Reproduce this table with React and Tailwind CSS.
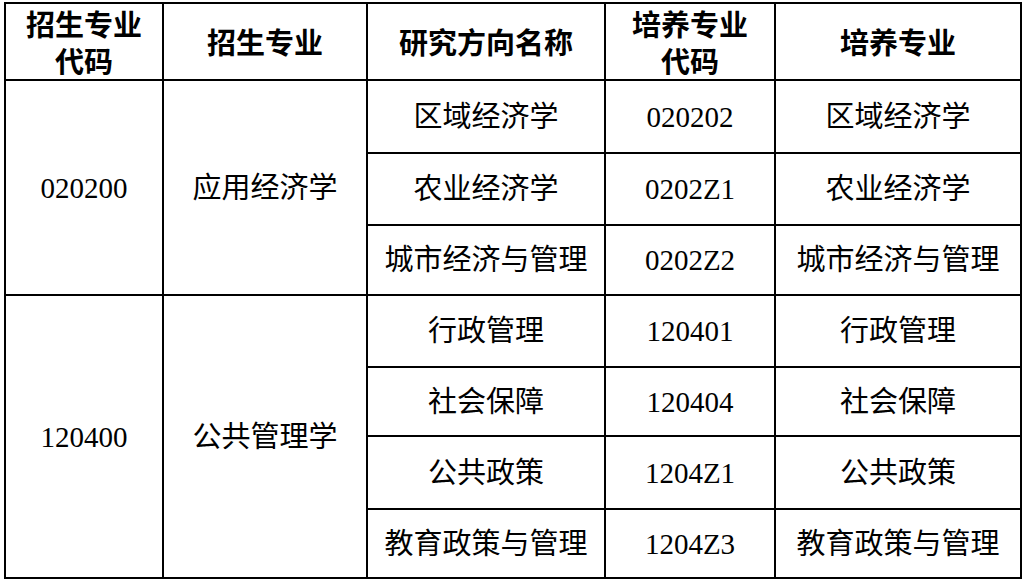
const serif = "font-['Liberation_Serif','Noto_Sans_CJK_SC',serif]";

const groups = [
  {
    code: "020200",
    name: "应用经济学",
    rows: [
      { dir: "区域经济学", pcode: "020202", pname: "区域经济学", h: "h-[73px]" },
      { dir: "农业经济学", pcode: "0202Z1", pname: "农业经济学", h: "h-[72px]" },
      { dir: "城市经济与管理", pcode: "0202Z2", pname: "城市经济与管理", h: "h-[70px]" },
    ],
  },
  {
    code: "120400",
    name: "公共管理学",
    rows: [
      { dir: "行政管理", pcode: "120401", pname: "行政管理", h: "h-[72px]" },
      { dir: "社会保障", pcode: "120404", pname: "社会保障", h: "h-[69px]" },
      { dir: "公共政策", pcode: "1204Z1", pname: "公共政策", h: "h-[73px]" },
      { dir: "教育政策与管理", pcode: "1204Z3", pname: "教育政策与管理", h: "h-[69px]" },
    ],
  },
];

const cell = "border-2 border-black text-center align-middle p-0 whitespace-nowrap";

export default function App() {
  return (
    <div className={`w-[1024px] h-[582px] bg-white overflow-hidden pt-[2px] pl-[4px] text-black ${serif}`}>
      <table className="table-fixed border-collapse w-[1016px]">
        <colgroup>
          <col className="w-[158px]" />
          <col className="w-[204px]" />
          <col className="w-[238px]" />
          <col className="w-[170px]" />
          <col className="w-[246px]" />
        </colgroup>
        <thead>
          {/* header: bold, two-line labels */}
          <tr className="h-[77px] text-[29px] leading-[37px] font-bold font-['Noto_Sans_CJK_SC',sans-serif]">
            <th className={cell}>招生专业<br />代码</th>
            <th className={cell}>招生专业</th>
            <th className={cell}>研究方向名称</th>
            <th className={cell}>培养专业<br />代码</th>
            <th className={cell}>培养专业</th>
          </tr>
        </thead>
        <tbody className="text-[29px] leading-[36px]">
          {groups.map((g) =>
            g.rows.map((r, i) => (
              <tr key={r.pcode} className={r.h}>
                {i === 0 && (
                  <>
                    <td rowSpan={g.rows.length} className={cell}>{g.code}</td>
                    <td rowSpan={g.rows.length} className={cell}>{g.name}</td>
                  </>
                )}
                <td className={cell}>{r.dir}</td>
                <td className={cell}>{r.pcode}</td>
                <td className={cell}>{r.pname}</td>
              </tr>
            ))
          )}
        </tbody>
      </table>
    </div>
  );
}
